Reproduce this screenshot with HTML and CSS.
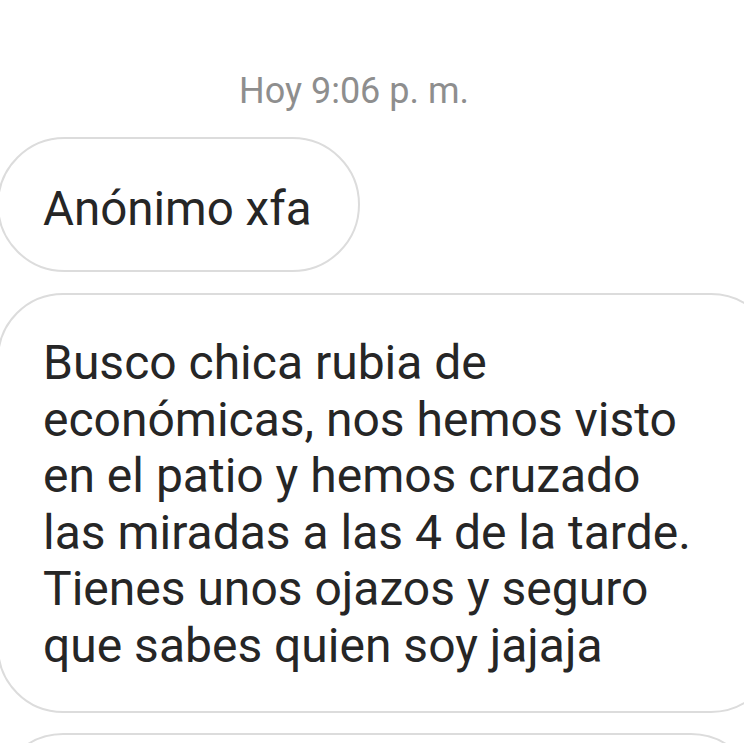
FILE: index.html
```html
<!DOCTYPE html>
<html lang="es">
<head>
<meta charset="utf-8">
<title>Chat</title>
<link rel="stylesheet" href="styles.css">
</head>
<body>
<div class="thread">
  <div class="stamp">Hoy 9:06 p. m.</div>
  <div class="bubble short">Anónimo xfa</div>
  <div class="bubble long">Busco chica rubia de
económicas, nos hemos visto
en el patio y hemos cruzado
las miradas a las 4 de la tarde.
Tienes unos ojazos y seguro
que sabes quien soy jajaja</div>
  <div class="bubble next"></div>
</div>
</body>
</html>
```

FILE: styles.css
```css
html, body {
  margin: 0;
  padding: 0;
  background: #ffffff;
  overflow: hidden;
  height: 743px;
}
.thread {
  display: flex;
  flex-direction: column;
  align-items: flex-start;
  font-family: Roboto, "Noto Sans", sans-serif;
  color: #262626;
  padding-top: 71px;
  height: 743px;
  box-sizing: border-box;
  overflow: hidden;
}
.stamp {
  align-self: stretch;
  text-align: center;
  padding-right: 36px;
  font-size: 36px;
  line-height: 40px;
  color: #8e8e8e;
  margin-bottom: 26px;
}
.bubble {
  border: 2px solid #dcdcdc;
  background: #fff;
  margin-left: -3px;
  box-sizing: border-box;
  flex-shrink: 0;
}
.short {
  font-size: 47.5px;
  border-radius: 68px;
  padding: 42px 46px 31px 44px;
  line-height: 56px;
  height: 135px;
}
.long {
  font-size: 48px;
  margin-top: 21px;
  width: 780px;
  border-radius: 66px;
  padding: 40px 40px 37px 44px;
  line-height: 56.5px;
  white-space: pre-line;
  height: 420px;
}
.next {
  margin-top: 20px;
  width: 760px;
  height: 140px;
  border-radius: 66px;
}
```
